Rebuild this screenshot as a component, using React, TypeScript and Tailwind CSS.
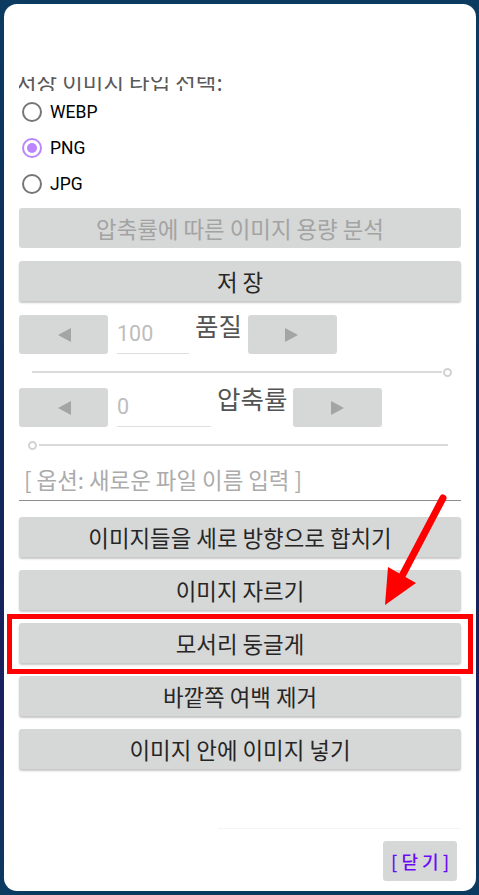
import React from "react"

const KR = "font-['Noto_Sans_CJK_KR','Noto_Sans',sans-serif]"

const ActionButton = ({ label, disabled }: { label: string; disabled?: boolean }) => (
  <div
    className={`flex h-[40px] items-center justify-center rounded-[3px] bg-[#d6d7d7] text-[22.4px] leading-none ${
      disabled ? "text-[#a3a3a3]" : "text-[#262626] shadow-[0_2px_2px_rgba(0,0,0,0.22)]"
    }`}
  >
    {label}
  </div>
)

const Radio = ({ label, checked }: { label: string; checked?: boolean }) => (
  <div className="flex h-[36px] items-center gap-[8px] pl-[3px]">
    <span
      className={`flex h-[20px] w-[20px] items-center justify-center rounded-full border-2 ${
        checked ? "border-[#bb86fc]" : "border-[#767676]"
      }`}
    >
      {checked && <span className="h-[10px] w-[10px] rounded-full bg-[#bb86fc]" />}
    </span>
    <span className="font-['Roboto',sans-serif] text-[17.5px] text-black">{label}</span>
  </div>
)

const StepButton = ({ dir }: { dir: "left" | "right" }) => (
  <div className="flex h-[39px] w-[89px] shrink-0 items-center justify-center rounded-[3px] bg-[#d6d7d7]">
    <svg width="14" height="16" viewBox="0 0 14 16">
      {dir === "left" ? (
        <polygon points="14,1 14,15 1,8" fill="#a4a4a4" />
      ) : (
        <polygon points="0,1 0,15 13,8" fill="#a4a4a4" />
      )}
    </svg>
  </div>
)

const Slider = ({ atEnd }: { atEnd: boolean }) => (
  <div className="flex h-[16px] items-center">
    {atEnd ? (
      <>
        <div className="ml-[13px] h-[2px] w-[410px] bg-[#dadada]" />
        <span className="ml-[1px] h-[9px] w-[9px] rounded-full border-2 border-[#d2d2d2]" />
      </>
    ) : (
      <>
        <span className="ml-[9px] h-[9px] w-[9px] rounded-full border-2 border-[#d2d2d2]" />
        <div className="ml-[2px] h-[2px] w-[409px] bg-[#dadada]" />
      </>
    )}
  </div>
)

export default function App() {
  return (
    <div className="h-[895px] w-[479px] overflow-hidden bg-[linear-gradient(180deg,#0b3b60_0%,#10295a_45%,#1a1f5e_80%,#0b3b60_100%)] pt-[4px] pl-[4px]">
      <div className={`relative flex h-[887px] w-[472px] flex-col rounded-[13px] bg-white px-[15px] ${KR}`}>
        <div className="h-[73px] shrink-0" />
        <div className="h-[14px] shrink-0 overflow-hidden">
          <div className="-mt-[9px] -ml-[3px] text-[22.4px] leading-[26px] text-[#595959]">
            저장 이미지 타입 선택:
          </div>
        </div>

        <div className="mt-[3px] flex flex-col">
          <Radio label="WEBP" />
          <Radio label="PNG" checked />
          <Radio label="JPG" />
        </div>

        <div className="mt-[6px]">
          <ActionButton label="압축률에 따른 이미지 용량 분석" disabled />
        </div>
        <div className="mt-[13px]">
          <ActionButton label="저 장" />
        </div>

        <div className="mt-[14px] flex h-[39px] items-start">
          <StepButton dir="left" />
          <div className="ml-[9px] flex h-[39px] w-[72px] items-center border-b border-[#dedede] font-['Roboto',sans-serif] text-[21.5px] text-[#bdbdbd]">
            100
          </div>
          <div className="ml-[6px] -mt-[5px] text-[25.5px] leading-[30px] text-[#545454]">품질</div>
          <div className="ml-[6px]">
            <StepButton dir="right" />
          </div>
        </div>

        <div className="mt-[10px]">
          <Slider atEnd />
        </div>

        <div className="mt-[8px] flex h-[40px] items-start">
          <StepButton dir="left" />
          <div className="ml-[9px] flex h-[39px] w-[94px] items-center border-b border-[#dedede] font-['Roboto',sans-serif] text-[21.5px] text-[#bdbdbd]">
            0
          </div>
          <div className="ml-[6px] -mt-[5px] text-[25.5px] leading-[30px] text-[#545454]">압축률</div>
          <div className="ml-[6px]">
            <StepButton dir="right" />
          </div>
        </div>

        <div className="mt-[9px]">
          <Slider atEnd={false} />
        </div>

        <div className="mt-[7px] flex h-[41px] items-center border-b-[1.5px] border-[#8c8c8c] pl-[5px] text-[22.4px] text-[#ababab]">
          [ 옵션: 새로운 파일 이름 입력 ]
        </div>

        <div className="mt-[16px] flex flex-col gap-[13px]">
          <ActionButton label="이미지들을 세로 방향으로 합치기" />
          <ActionButton label="이미지 자르기" />
          <ActionButton label="모서리 둥글게" />
          <ActionButton label="바깥쪽 여백 제거" />
          <ActionButton label="이미지 안에 이미지 넣기" />
        </div>

        <div className="mt-[59px] ml-[199px] h-px bg-[#f4f4f4]" />

        <div className="mt-[12px] mr-[4px] flex h-[40px] w-[74px] items-center justify-center self-end rounded-[3px] bg-[#d6d7d7] text-[18px] font-medium text-[#6a0cf5]">
          [ 닫 기 ]
        </div>

        {/* annotation overlay */}
        <div className="absolute top-[610px] left-[3px] h-[60px] w-[466px] border-[5px] border-[#ff0000]" />
        <svg className="absolute top-0 left-0" width="472" height="887" viewBox="0 0 472 887">
          <line x1="439" y1="494" x2="398" y2="572" stroke="#ff0000" strokeWidth="7" strokeLinecap="round" />
          <polygon points="381,601 384,563 412,579" fill="#ff0000" />
        </svg>
      </div>
    </div>
  )
}
